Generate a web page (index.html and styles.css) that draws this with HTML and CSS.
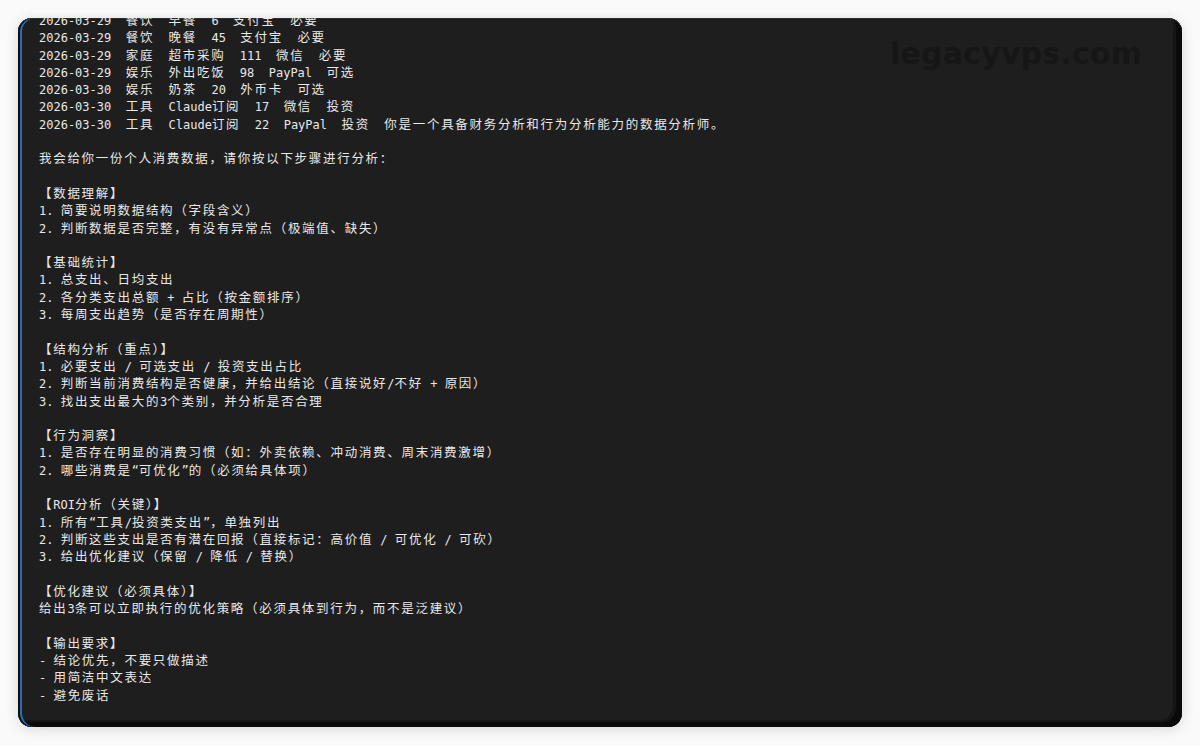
FILE: index.html
```html
<!DOCTYPE html>
<html lang="zh-CN">
<head>
<meta charset="utf-8">
<title>Terminal</title>
<link rel="stylesheet" href="styles.css">
</head>
<body>
<div class="term">
<pre class="out">
2026-03-29  <span class="w">餐饮</span>  <span class="w">早餐</span>  6  <span class="w">支付宝</span>  <span class="w">必要</span>
2026-03-29  <span class="w">餐饮</span>  <span class="w">晚餐</span>  45  <span class="w">支付宝</span>  <span class="w">必要</span>
2026-03-29  <span class="w">家庭</span>  <span class="w">超市采购</span>  111  <span class="w">微信</span>  <span class="w">必要</span>
2026-03-29  <span class="w">娱乐</span>  <span class="w">外出吃饭</span>  98  PayPal  <span class="w">可选</span>
2026-03-30  <span class="w">娱乐</span>  <span class="w">奶茶</span>  20  <span class="w">外币卡</span>  <span class="w">可选</span>
2026-03-30  <span class="w">工具</span>  Claude<span class="w">订阅</span>  17  <span class="w">微信</span>  <span class="w">投资</span>
2026-03-30  <span class="w">工具</span>  Claude<span class="w">订阅</span>  22  PayPal  <span class="w">投资</span>  <span class="w">你是一个具备财务分析和行为分析能力的数据分析师。</span>

<span class="w">我会给你一份个人消费数据，请你按以下步骤进行分析：</span>

<span class="w">【数据理解】</span>
1. <span class="w">简要说明数据结构（字段含义）</span>
2. <span class="w">判断数据是否完整，有没有异常点（极端值、缺失）</span>

<span class="w">【基础统计】</span>
1. <span class="w">总支出、日均支出</span>
2. <span class="w">各分类支出总额</span> + <span class="w">占比（按金额排序）</span>
3. <span class="w">每周支出趋势（是否存在周期性）</span>

<span class="w">【结构分析（重点）】</span>
1. <span class="w">必要支出</span> / <span class="w">可选支出</span> / <span class="w">投资支出占比</span>
2. <span class="w">判断当前消费结构是否健康，并给出结论（直接说好</span>/<span class="w">不好</span> + <span class="w">原因）</span>
3. <span class="w">找出支出最大的</span>3<span class="w">个类别，并分析是否合理</span>

<span class="w">【行为洞察】</span>
1. <span class="w">是否存在明显的消费习惯（如：外卖依赖、冲动消费、周末消费激增）</span>
2. <span class="w">哪些消费是</span>“<span class="w">可优化</span>”<span class="w">的（必须给具体项）</span>

<span class="w">【</span>ROI<span class="w">分析（关键）】</span>
1. <span class="w">所有</span>“<span class="w">工具</span>/<span class="w">投资类支出</span>”<span class="w">，单独列出</span>
2. <span class="w">判断这些支出是否有潜在回报（直接标记：高价值</span> / <span class="w">可优化</span> / <span class="w">可砍）</span>
3. <span class="w">给出优化建议（保留</span> / <span class="w">降低</span> / <span class="w">替换）</span>

<span class="w">【优化建议（必须具体）】</span>
<span class="w">给出</span>3<span class="w">条可以立即执行的优化策略（必须具体到行为，而不是泛建议）</span>

<span class="w">【输出要求】</span>
- <span class="w">结论优先，不要只做描述</span>
- <span class="w">用简洁中文表达</span>
- <span class="w">避免废话</span>
</pre>
<div class="wm">legacyvps.com</div>
</div>
</body>
</html>
```

FILE: styles.css
```css
html, body {
  margin: 0;
  height: 746px;
  overflow: hidden;
}

body {
  background: #fafafa;
  padding: 18px 18px 0;
  box-sizing: border-box;
}

.term {
  position: relative;
  height: 709px;
  border-radius: 14px;
  background: #1e1e1e;
  overflow: hidden;
  box-shadow:
    inset 0 1px 0 #2c2c2c,
    inset 2px 0 0 #0d0d0d,
    inset 4px 0 0 #2d6cb3,
    inset -6px -5px 0 #0a0a0a,
    inset -9px -7px 0 #151515,
    0 2px 14px rgba(0, 0, 0, 0.14);
}

.out {
  margin: -5px 0 0;
  padding-left: 21px;
  font-family: "DejaVu Sans Mono", monospace;
  font-size: 12px;
  line-height: 17.3px;
  color: #e8e8e8;
}

.w {
  font-family: "Noto Sans CJK SC", sans-serif;
  font-size: 12.5px;
  letter-spacing: 1.7px;
  line-height: 1;
}

.wm {
  position: absolute;
  left: 872px;
  top: 21px;
  font-family: "DejaVu Sans", sans-serif;
  font-weight: bold;
  font-size: 30px;
  line-height: 30px;
  letter-spacing: 0.2px;
  color: #161616;
}
```
